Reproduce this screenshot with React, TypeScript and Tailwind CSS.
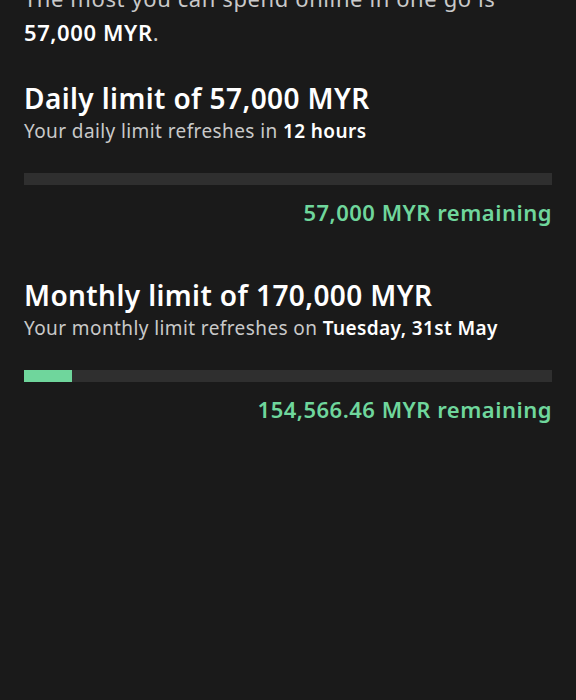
import React from "react";

function Limit({
  title,
  sub,
  subBold,
  pct,
  remaining,
}: {
  title: string;
  sub: string;
  subBold: string;
  pct: number;
  remaining: string;
}) {
  return (
    <div className="flex flex-col">
      <h2 className="text-[28px] leading-[36px] font-semibold tracking-[0.4px] text-white">{title}</h2>
      <p className="mt-[2px] text-[19px] leading-[26px] tracking-[0.4px] text-[#c9c9c9]">
        {sub} <span className="font-semibold text-white">{subBold}</span>
      </p>
      <div className="mt-[29px] h-[12px] w-full bg-[#2f2f2f]">
        <div className="h-full bg-[#6fd69c]" style={{ width: `${pct}%` }} />
      </div>
      <p className="mt-[13px] text-right text-[22px] leading-[28px] font-semibold tracking-[0.5px] text-[#6fd69c]">
        {remaining}
      </p>
    </div>
  );
}

export default function App() {
  return (
    <div
      className="min-h-[700px] w-full bg-[#1a1a1a] px-6 overflow-hidden"
      style={{ fontFamily: "'Noto Sans', sans-serif" }}
    >
      <p className="-mt-[19px] text-[22px] leading-[34px] tracking-[0.6px] text-[#c9c9c9]">
        The most you can spend online in one go is
        <br />
        <span className="font-semibold text-white">57,000 MYR</span>.
      </p>
      <div className="mt-[31px] flex flex-col gap-[51px]">
        <Limit
          title="Daily limit of 57,000 MYR"
          sub="Your daily limit refreshes in"
          subBold="12 hours"
          pct={0}
          remaining="57,000 MYR remaining"
        />
        <Limit
          title="Monthly limit of 170,000 MYR"
          sub="Your monthly limit refreshes on"
          subBold="Tuesday, 31st May"
          pct={9.08}
          remaining="154,566.46 MYR remaining"
        />
      </div>
    </div>
  );
}
